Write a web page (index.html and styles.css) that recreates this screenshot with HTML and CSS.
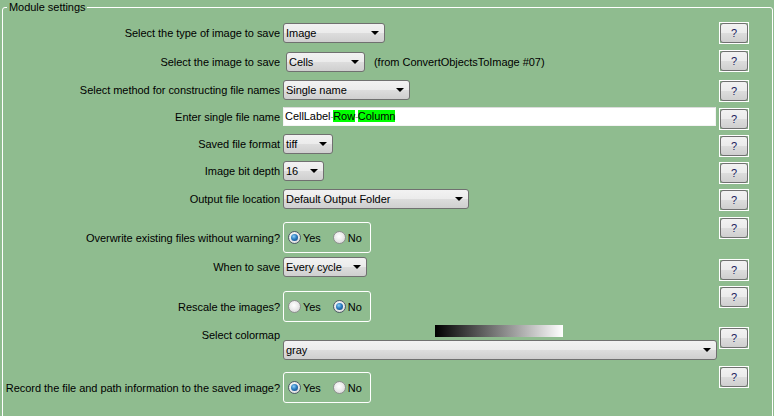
FILE: index.html
```html
<!DOCTYPE html>
<html>
<head>
<meta charset="utf-8">
<link rel="stylesheet" href="styles.css">
</head>
<body>
<fieldset class="settings">
  <legend class="legend">Module settings</legend>
  <div class="form">
    <!-- row 1 -->
    <div class="label mt1">Select the type of image to save</div>
    <div class="control mt1"><div class="combo w-type"><span class="val">Image</span><span class="arrow"></span></div></div>
    <div class="help"><span class="help-i">?</span></div>

    <!-- row 2 -->
    <div class="label mt2">Select the image to save</div>
    <div class="control mt2"><div class="combo w-cells"><span class="val">Cells</span><span class="arrow"></span></div><span class="note">(from ConvertObjectsToImage #07)</span></div>
    <div class="help"><span class="help-i">?</span></div>

    <!-- row 3 -->
    <div class="label">Select method for constructing file names</div>
    <div class="control"><div class="combo w-method"><span class="val">Single name</span><span class="arrow"></span></div></div>
    <div class="help"><span class="help-i">?</span></div>

    <!-- row 4 -->
    <div class="label label-input">Enter single file name</div>
    <div class="control"><div class="textbox">CellLabel<span class="sep">-</span><span class="tok">Row</span><span class="sep">-</span><span class="tok">Column</span></div></div>
    <div class="help mt1"><span class="help-i">?</span></div>

    <!-- row 5 -->
    <div class="label">Saved file format</div>
    <div class="control"><div class="combo w-format"><span class="val">tiff</span><span class="arrow"></span></div></div>
    <div class="help mt1"><span class="help-i">?</span></div>

    <!-- row 6 -->
    <div class="label">Image bit depth</div>
    <div class="control"><div class="combo w-depth"><span class="val">16</span><span class="arrow"></span></div></div>
    <div class="help mt1"><span class="help-i">?</span></div>

    <!-- row 7 -->
    <div class="label">Output file location</div>
    <div class="control"><div class="combo w-location"><span class="val">Default Output Folder</span><span class="arrow"></span></div></div>
    <div class="help"><span class="help-i">?</span></div>

    <!-- row 8 -->
    <div class="label label-radio mt5">Overwrite existing files without warning?</div>
    <div class="control mt5"><div class="radiobox"><span class="opt"><span class="radio on"></span>Yes</span><span class="opt"><span class="radio"></span>No</span></div></div>
    <div class="help"><span class="help-i">?</span></div>

    <!-- row 9 -->
    <div class="label">When to save</div>
    <div class="control"><div class="combo w-when"><span class="val">Every cycle</span><span class="arrow"></span></div></div>
    <div class="help mt2"><span class="help-i">?</span></div>

    <!-- row 10 -->
    <div class="label label-radio mt5">Rescale the images?</div>
    <div class="control mt5"><div class="radiobox"><span class="opt"><span class="radio"></span>Yes</span><span class="opt"><span class="radio on"></span>No</span></div></div>
    <div class="help"><span class="help-i">?</span></div>

    <!-- row 11 -->
    <div class="label">Select colormap</div>
    <div class="control control-col"><div class="colormap"></div><div class="combo w-full"><span class="val">gray</span><span class="arrow"></span></div></div>
    <div class="help mt2"><span class="help-i">?</span></div>

    <!-- row 12 -->
    <div class="label label-radio mt6">Record the file and path information to the saved image?</div>
    <div class="control mt6"><div class="radiobox"><span class="opt"><span class="radio on"></span>Yes</span><span class="opt"><span class="radio"></span>No</span></div></div>
    <div class="help"><span class="help-i">?</span></div>
  </div>
</fieldset>
</body>
</html>
```

FILE: styles.css
```css
html, body {
  margin: 0;
  padding: 0;
  background: #8fbc8f;
  overflow: hidden;
}
body {
  font-family: "Liberation Sans", Arial, sans-serif;
  font-size: 11px;
  letter-spacing: -0.04px;
  color: #000;
}
.settings {
  margin: 1px 1px 0 2px;
  padding: 0;
  border: 1px solid #ffffff;
  border-radius: 3px;
  min-height: 430px;
  box-sizing: border-box;
}
.legend {
  margin-left: 4px;
  padding: 0 2px;
  line-height: 13px;
  font-size: 11px;
}
.form {
  display: grid;
  grid-template-columns: 277px 433px 30px;
  column-gap: 3px;
  grid-template-rows: 28px 30px 27px 27px 27px 28px 28px 40px 29px 39px 41px auto;
  align-items: start;
  padding-top: 8px;
}
.label {
  height: 20px;
  display: flex;
  align-items: center;
  justify-content: flex-end;
  white-space: nowrap;
}
.label-input { height: 19px; }
.label-radio { height: 31px; }
.mt1 { margin-top: 1px; }
.mt2 { margin-top: 2px; }
.mt5 { margin-top: 5px; }
.mt6 { margin-top: 6px; }
.control {
  display: flex;
  align-items: center;
}
.control-col {
  flex-direction: column;
  align-items: flex-start;
}
.combo {
  position: relative;
  height: 20px;
  box-sizing: border-box;
  border: 1px solid #707070;
  border-radius: 3px;
  background: linear-gradient(#f2f2f2 0%, #ebebeb 50%, #dddddd 50%, #cfcfcf 100%);
  display: flex;
  align-items: center;
  padding-left: 2px;
  white-space: nowrap;
}
.val { line-height: 18px; }
.arrow {
  position: absolute;
  right: 5px;
  top: 7px;
  width: 0;
  height: 0;
  border-left: 4px solid transparent;
  border-right: 4px solid transparent;
  border-top: 4px solid #000;
}
.w-type { width: 102px; }
.w-cells { width: 79px; margin-left: 3px; }
.w-method { width: 127px; }
.w-format { width: 50px; }
.w-depth { width: 41px; }
.w-location { width: 186px; }
.w-when { width: 84px; }
.w-full { width: 434px; }
.note { margin-left: 9px; }
.textbox {
  width: 434px;
  height: 19px;
  box-sizing: border-box;
  background: #fff;
  border: 1px solid #f4f4f4;
  border-top-color: #dcdcdc;
  padding-left: 1px;
  line-height: 17px;
  white-space: nowrap;
}
.tok { background: #00ff00; }
.sep { color: #9a9a9a; letter-spacing: -1px; }
.colormap {
  width: 128px;
  height: 12px;
  margin-left: 152px;
  margin-bottom: 3px;
  background: linear-gradient(to right, #000000, #ffffff);
}
.radiobox {
  width: 88px;
  height: 31px;
  box-sizing: border-box;
  border: 1px solid #ffffff;
  border-radius: 3px;
  display: flex;
  align-items: center;
  padding-left: 4px;
  gap: 12px;
}
.opt {
  display: flex;
  align-items: center;
  gap: 2px;
}
.radio {
  position: relative;
  width: 13px;
  height: 13px;
  box-sizing: border-box;
  border-radius: 50%;
  border: 1px solid #8e8f8f;
  background: radial-gradient(circle at 45% 40%, #ffffff 0%, #ececec 45%, #cfcfcf 100%);
}
.radio.on {
  border-color: #4d5a66;
}
.radio.on::after {
  content: "";
  position: absolute;
  left: 2px;
  top: 2px;
  width: 7px;
  height: 7px;
  border-radius: 50%;
  background: radial-gradient(circle at 40% 35%, #8fd0f5 0%, #2a7cc0 45%, #0e3f72 100%);
}
.help {
  width: 30px;
  height: 22px;
  box-sizing: border-box;
  border: 1px solid #ffffff;
  display: flex;
}
.help-i {
  flex: 1;
  border: 1px solid #707070;
  border-radius: 3px;
  background: linear-gradient(#f2f2f2 0%, #ebebeb 50%, #dddddd 50%, #cfcfcf 100%);
  display: flex;
  align-items: center;
  justify-content: center;
  color: #22225e;
  font-size: 11px;
}
```
